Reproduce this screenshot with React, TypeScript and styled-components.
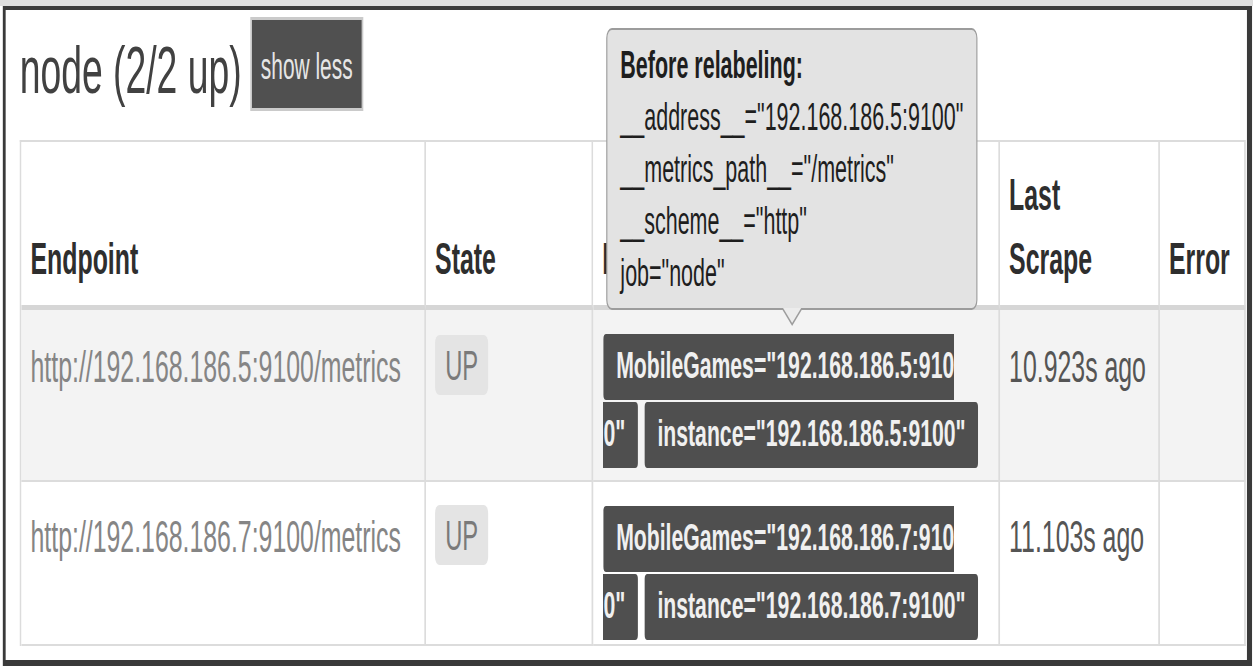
import React from 'react'
import styled, { createGlobalStyle } from 'styled-components'

// the capture is squeezed sideways: the page is laid out wide and squeezed back as a whole
const SQUEEZE = 0.565

const GlobalStyle = createGlobalStyle`
    html, body {
        margin: 0;
        padding: 0;
        overflow: hidden;
        background: #fff;
    }
    *, *::before, *::after {
        box-sizing: border-box;
    }
    body {
        font-family: 'Liberation Sans', Arial, sans-serif;
        color: #333;
    }
`

const Screen = styled.div`
    width: ${Math.ceil(1253 / SQUEEZE)}px;
    transform: scaleX(${SQUEEZE});
    transform-origin: 0 0;
    border-top: 6px solid #dedede;
    padding-left: 5px;
`

const Panel = styled.div`
    width: 2211px;
    border: solid #3a3a3a;
    border-width: 4px 9px 6px 5px;
    background: #fff;
    padding: 0 2px 14px 25px;
`

const Heading = styled.div`
    display: flex;
    align-items: flex-start;
    padding-top: 10px;
`

const Title = styled.h2`
    margin: 14px 0 0;
    font-size: 66px;
    line-height: 72px;
    font-weight: normal;
    color: #414141;
`

const ToggleButton = styled.button`
    margin-left: 18px;
    height: 88px;
    padding: 6px 16px 0;
    border: none;
    background: #505050;
    box-shadow: 0 0 0 3px #cacaca;
    color: #e6e6e6;
    font-family: inherit;
    font-size: 37px;
    cursor: pointer;
`

const Table = styled.table`
    margin-top: 32px;
    width: 100%;
    table-layout: fixed;
    border-collapse: separate;
    border-spacing: 0;
    border-top: 2px solid #dcdcdc;
    border-left: 3px solid #dcdcdc;
    font-size: 44px;
    line-height: 63px;
`

const Th = styled.th<{ $w: number }>`
    width: ${p => p.$w}px;
    padding: 21px 16px 14px;
    text-align: left;
    vertical-align: bottom;
    font-weight: bold;
    line-height: 64px;
    color: #2e2e2e;
    background: #fff;
    border-right: 3px solid #dcdcdc;
    border-bottom: 5px solid #d6d6d6;
`

const Row = styled.tr<{ $striped?: boolean }>`
    background: ${p => (p.$striped ? '#f3f3f3' : '#fff')};
`

const Cell = styled.td<{ $tall?: boolean }>`
    padding: ${p => (p.$tall ? 25 : 23)}px 16px ${p => (p.$tall ? 13 : 5)}px;
    vertical-align: top;
    border-right: 3px solid #dcdcdc;
    border-bottom: 2px solid #dcdcdc;
`

const EndpointLink = styled.span`
    color: #858585;
`

const ScrapeTime = styled.span`
    color: #555;
`

const StateBadge = styled.span`
    display: inline-block;
    vertical-align: top;
    padding: 10px 18px 8px;
    font-size: 42px;
    line-height: 42px;
    border-radius: 8px;
    background: #e4e4e4;
    color: #7a7a7a;
`

const LabelCell = styled(Cell)`
    padding-top: 21px;
    padding-left: 18px;
    padding-right: 0;
    font-size: 37.5px;
    line-height: 68px;
`

const LabelList = styled.div`
    position: relative;
    width: 630px;
`

const Label = styled.span<{ $tail?: boolean }>`
    padding: 10px 22.5px 14px;
    border-radius: 5px;
    background: #4f4f4f;
    color: #f0f0f0;
    font-weight: bold;
    ${p => (p.$tail ? 'margin-left: 12px; white-space: nowrap;' : 'word-break: break-all;')}
`

const Tooltip = styled.div`
    position: absolute;
    left: 5px;
    bottom: calc(100% + 21px);
    width: 657px;
    padding: 9px 23px;
    background: #e3e3e3;
    border: 2px solid #9c9c9c;
    border-radius: 10px;
    color: #1e1e1e;
    font-size: 38px;
    line-height: 52px;
    font-weight: normal;
    white-space: nowrap;

    &::before,
    &::after {
        content: '';
        position: absolute;
        left: 50%;
        top: 100%;
        border: solid transparent;
    }
    &::before {
        margin-left: -19px;
        border-width: 18px 19px 0;
        border-top-color: #9c9c9c;
    }
    &::after {
        margin-left: -16px;
        border-width: 15px 16px 0;
        border-top-color: #ececec;
    }
`

const TipLine = styled.div<{ $strong?: boolean }>`
    font-weight: ${p => (p.$strong ? 'bold' : 'normal')};
`

type Target = {
    endpoint: string
    host: string
    lastScrape: string
}

const targets: Target[] = [
    { endpoint: 'http://192.168.186.5:9100/metrics', host: '192.168.186.5:9100', lastScrape: '10.923s ago' },
    { endpoint: 'http://192.168.186.7:9100/metrics', host: '192.168.186.7:9100', lastScrape: '11.103s ago' },
]

const TargetRow = ({ target, first }: { target: Target; first: boolean }) => (
    <Row $striped={first}>
        <Cell $tall={first}>
            <EndpointLink>{target.endpoint}</EndpointLink>
        </Cell>
        <Cell $tall={first}>
            <StateBadge>UP</StateBadge>
        </Cell>
        <LabelCell $tall={first}>
            <LabelList>
                {first && (
                    <Tooltip>
                        <TipLine $strong>Before relabeling:</TipLine>
                        <TipLine>__address__="{target.host}"</TipLine>
                        <TipLine>__metrics_path__="/metrics"</TipLine>
                        <TipLine>__scheme__="http"</TipLine>
                        <TipLine>job="node"</TipLine>
                    </Tooltip>
                )}
                <Label>MobileGames="{target.host}"</Label>
                <Label $tail>instance="{target.host}"</Label>
            </LabelList>
        </LabelCell>
        <Cell $tall={first}>
            <ScrapeTime>{target.lastScrape}</ScrapeTime>
        </Cell>
        <Cell $tall={first} />
    </Row>
)

export default function App() {
    return (
        <>
            <GlobalStyle />
            <Screen>
                <Panel>
                    <Heading>
                        <Title>node (2/2 up)</Title>
                        <ToggleButton>show less</ToggleButton>
                    </Heading>
                    <Table>
                        <thead>
                            <tr>
                                <Th $w={716}>Endpoint</Th>
                                <Th $w={296}>State</Th>
                                <Th $w={720}>Labels</Th>
                                <Th $w={283}>Last Scrape</Th>
                                <Th $w={152}>Error</Th>
                            </tr>
                        </thead>
                        <tbody>
                            {targets.map((target, i) => (
                                <TargetRow key={target.endpoint} target={target} first={i === 0} />
                            ))}
                        </tbody>
                    </Table>
                </Panel>
            </Screen>
        </>
    )
}
